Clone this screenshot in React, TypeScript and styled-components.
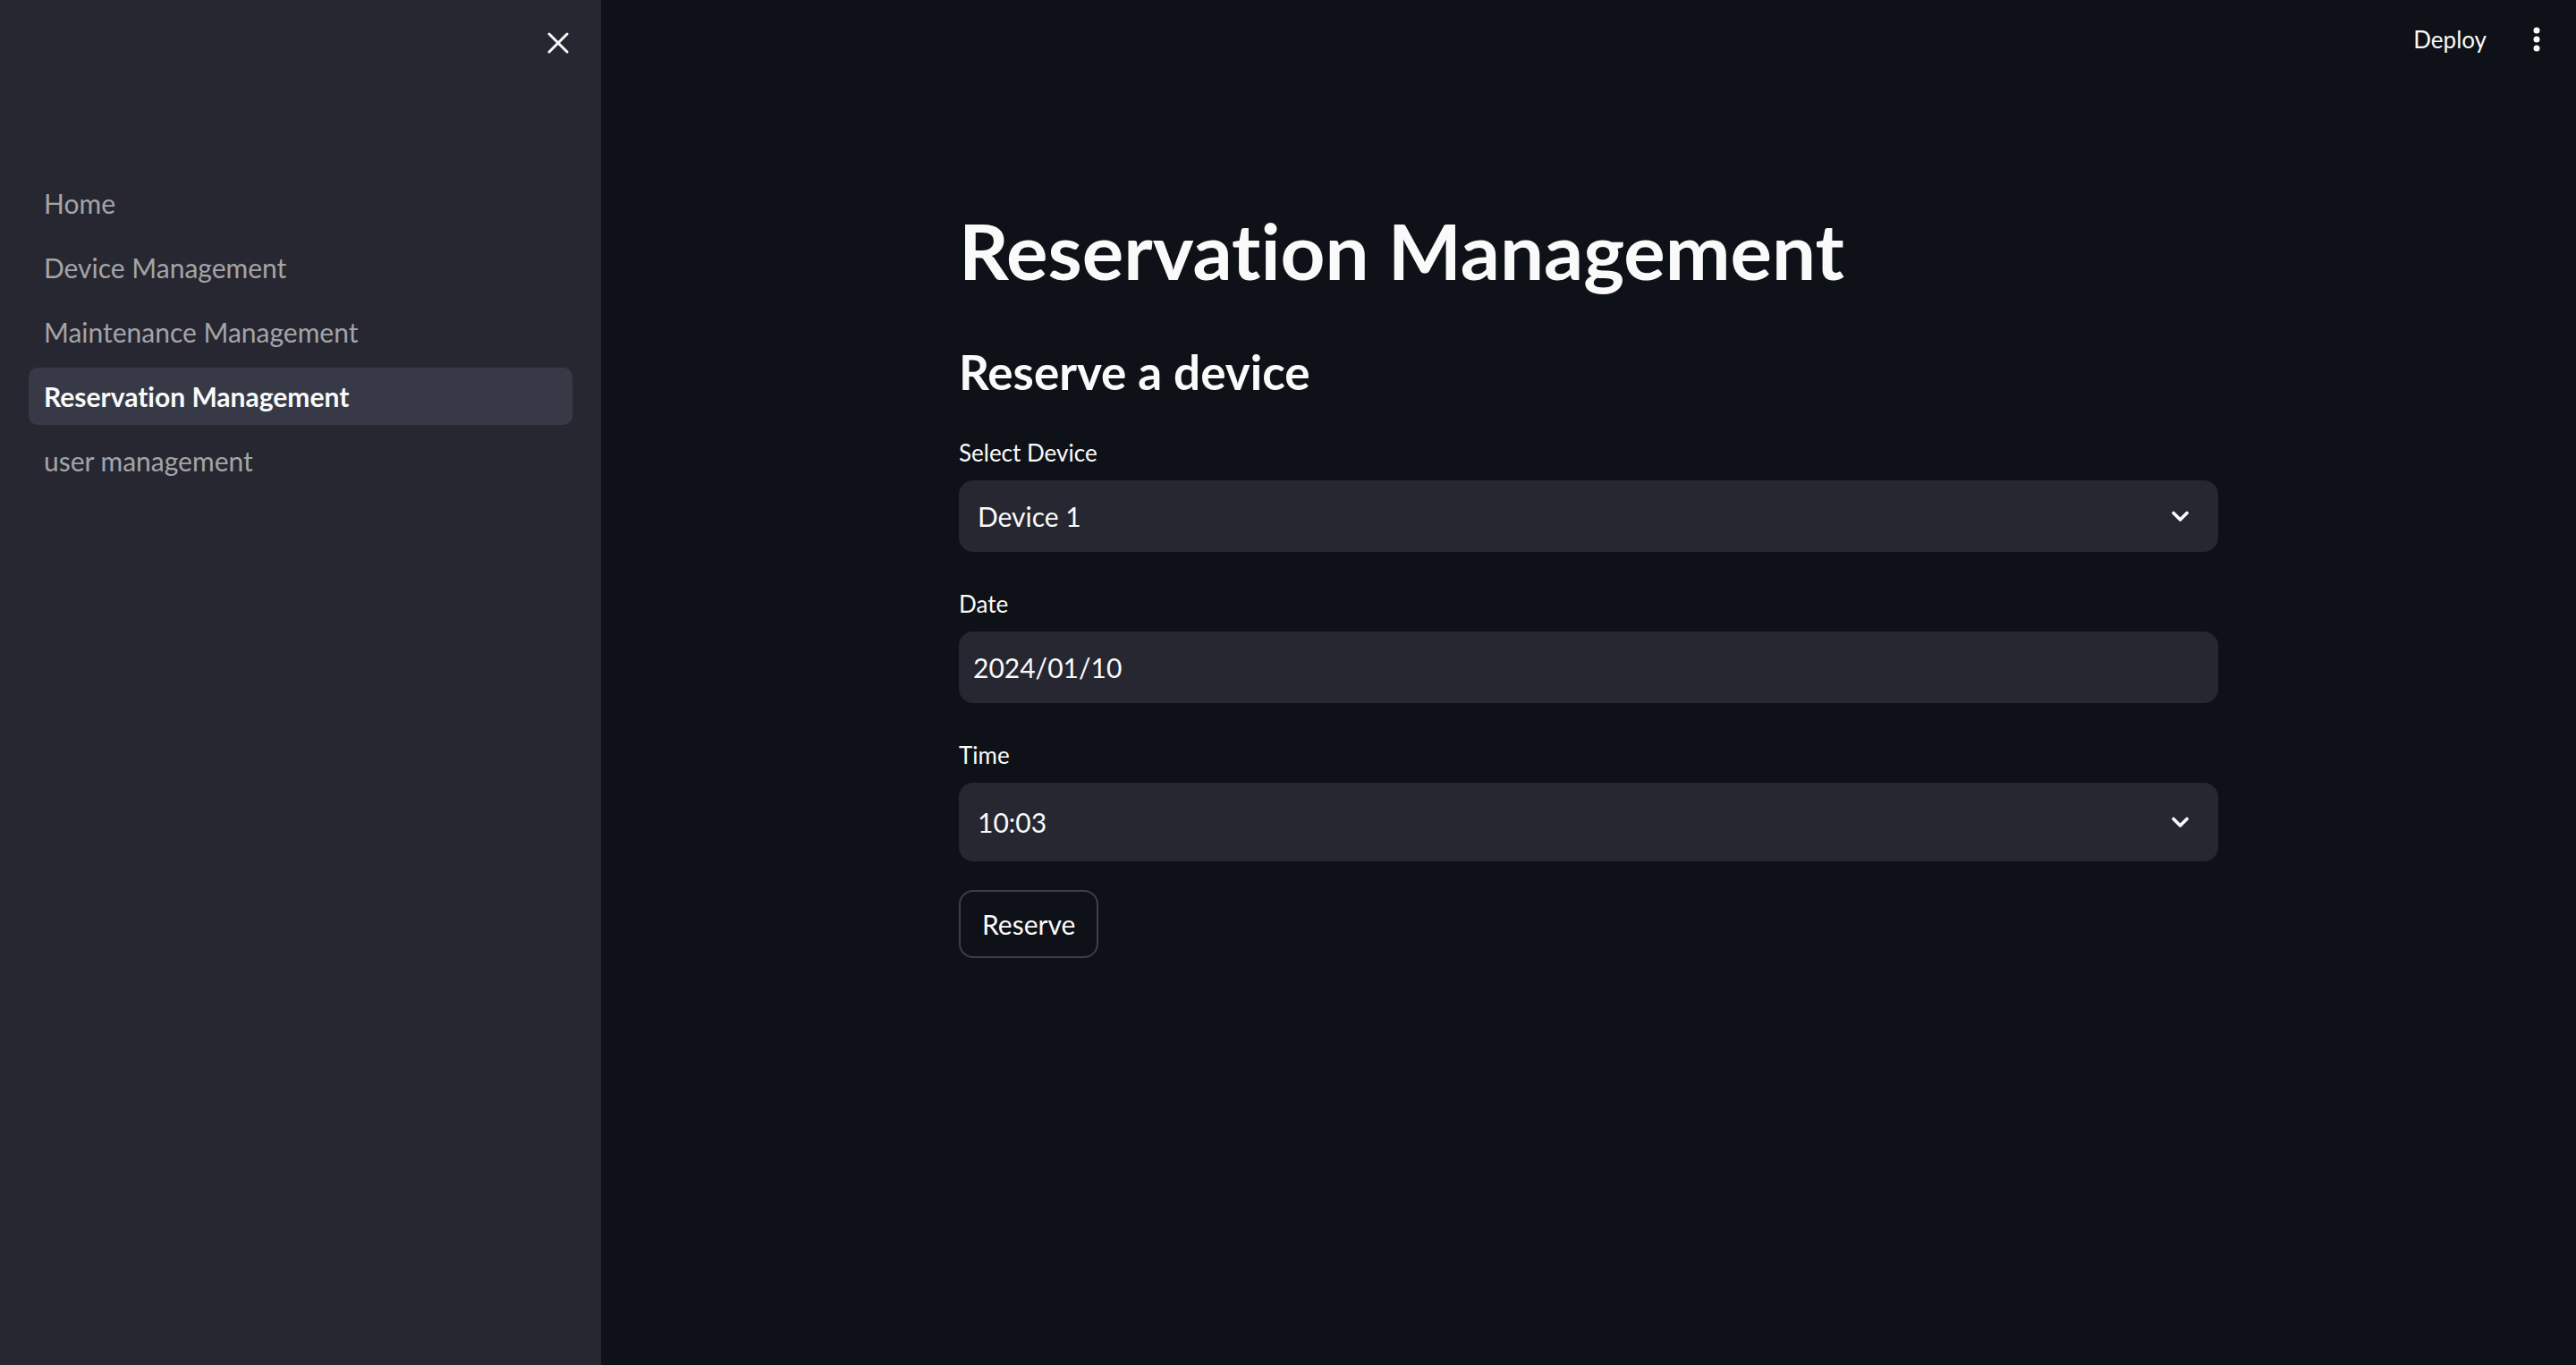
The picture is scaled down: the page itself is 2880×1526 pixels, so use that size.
import React from "react";
import styled, { createGlobalStyle } from "styled-components";

const FONT = `"Lato", "Liberation Sans", sans-serif`;

const Global = createGlobalStyle`
  html, body { margin: 0; padding: 0; background: #0e1117; }
  body {
    font-family: ${FONT};
    color: #fafafa;
    font-variant-ligatures: none;
    font-feature-settings: "liga" 0;
  }
  * { box-sizing: border-box; }
`;

const Shell = styled.div`
  display: flex;
  width: 2880px;
  height: 1526px;
  overflow: hidden;
  background: #0e1117;
`;

const Sidebar = styled.aside`
  width: 672px;
  flex-shrink: 0;
  background: #262730;
  display: flex;
  flex-direction: column;
`;

const SidebarHeader = styled.div`
  height: 96px;
  display: flex;
  justify-content: flex-end;
  align-items: center;
  padding-right: 26px;
`;

const IconButton = styled.button`
  width: 44px;
  height: 44px;
  display: flex;
  align-items: center;
  justify-content: center;
  background: transparent;
  border: none;
  padding: 0;
  color: #fafafa;
`;

const Nav = styled.nav`
  margin-top: 99px;
  padding: 0 32px;
  display: flex;
  flex-direction: column;
  gap: 8px;
`;

const NavLink = styled.a<{ $active?: boolean }>`
  height: 64px;
  display: flex;
  align-items: center;
  padding: 0 17px;
  border-radius: 10px;
  font-size: 30px;
  font-weight: ${(p) => (p.$active ? 700 : 400)};
  color: ${(p) => (p.$active ? "#fafafa" : "rgba(250, 250, 250, 0.6)")};
  background: ${(p) => (p.$active ? "#373a46" : "transparent")};
  text-decoration: none;
`;

const Main = styled.main`
  flex: 1;
  display: flex;
  flex-direction: column;
`;

const TopBar = styled.header`
  height: 88px;
  display: flex;
  justify-content: flex-end;
  align-items: center;
  padding-right: 16px;
  gap: 4px;
`;

const DeployButton = styled.button`
  height: 64px;
  padding: 0 24px;
  background: transparent;
  border: none;
  color: #fafafa;
  font-family: ${FONT};
  font-size: 26px;
`;

const MenuButton = styled.button`
  width: 56px;
  height: 64px;
  display: flex;
  align-items: center;
  justify-content: center;
  background: transparent;
  border: none;
  padding: 0;
`;

const Block = styled.section`
  width: 1408px;
  margin: 0 auto;
  display: flex;
  flex-direction: column;
`;

const Title = styled.h1`
  margin: 139px 0 0;
  font-size: 87px;
  line-height: 106px;
  font-weight: 700;
  color: #fafafa;
`;

const Subheader = styled.h3`
  margin: 49px 0 0;
  font-size: 53px;
  line-height: 67px;
  font-weight: 700;
  color: #fafafa;
`;

const Form = styled.div`
  margin-top: 37px;
  display: flex;
  flex-direction: column;
  gap: 38px;
`;

const Field = styled.div`
  display: flex;
  flex-direction: column;
  gap: 11px;
`;

const Label = styled.label`
  font-size: 26px;
  line-height: 40px;
  color: #fafafa;
`;

const SelectBox = styled.div<{ $h: number }>`
  height: ${(p) => p.$h}px;
  background: #262730;
  border-radius: 16px;
  display: flex;
  align-items: center;
  justify-content: space-between;
  padding: 0 33px 0 21px;
  font-size: 30px;
  color: #fafafa;
`;

const DateBox = styled.div`
  height: 80px;
  background: #262730;
  border-radius: 16px;
  display: flex;
  align-items: center;
  padding: 0 16px;
  font-size: 30px;
  color: #fafafa;
`;

const Actions = styled.div`
  margin-top: 32px;
  display: flex;
`;

const Button = styled.button`
  height: 76px;
  padding: 0 24px;
  border-radius: 16px;
  border: 2px solid rgba(250, 250, 250, 0.2);
  background: #0e1117;
  color: #fafafa;
  font-family: ${FONT};
  font-size: 30px;
`;

const Chevron = () => (
  <svg width="19" height="13" viewBox="0 0 19 13" fill="none">
    <polyline points="2,2.5 9.5,10 17,2.5" stroke="#fafafa" strokeWidth="3.6" strokeLinecap="round" strokeLinejoin="round" />
  </svg>
);

const CloseIcon = () => (
  <svg width="24" height="24" viewBox="0 0 24 24" fill="none">
    <path d="M2 2 L22 22 M22 2 L2 22" stroke="#fafafa" strokeWidth="3" strokeLinecap="round" />
  </svg>
);

const Kebab = () => (
  <svg width="8" height="28" viewBox="0 0 8 28" fill="#fafafa">
    <circle cx="4" cy="4" r="3.5" />
    <circle cx="4" cy="14" r="3.5" />
    <circle cx="4" cy="24" r="3.5" />
  </svg>
);

const pages = ["Home", "Device Management", "Maintenance Management", "Reservation Management", "user management"];

export default function App() {
  return (
    <>
      <Global />
      <Shell>
        <Sidebar>
          <SidebarHeader>
            <IconButton aria-label="Close sidebar">
              <CloseIcon />
            </IconButton>
          </SidebarHeader>
          <Nav>
            {pages.map((p) => (
              <NavLink key={p} $active={p === "Reservation Management"}>
                {p}
              </NavLink>
            ))}
          </Nav>
        </Sidebar>
        <Main>
          <TopBar>
            <DeployButton>Deploy</DeployButton>
            <MenuButton aria-label="Main menu">
              <Kebab />
            </MenuButton>
          </TopBar>
          <Block>
            <Title>Reservation Management</Title>
            <Subheader>Reserve a device</Subheader>
            <Form>
              <Field>
                <Label>Select Device</Label>
                <SelectBox $h={80}>
                  <span>Device 1</span>
                  <Chevron />
                </SelectBox>
              </Field>
              <Field>
                <Label>Date</Label>
                <DateBox>2024/01/10</DateBox>
              </Field>
              <Field>
                <Label>Time</Label>
                <SelectBox $h={88}>
                  <span>10:03</span>
                  <Chevron />
                </SelectBox>
              </Field>
            </Form>
            <Actions>
              <Button>Reserve</Button>
            </Actions>
          </Block>
        </Main>
      </Shell>
    </>
  );
}
